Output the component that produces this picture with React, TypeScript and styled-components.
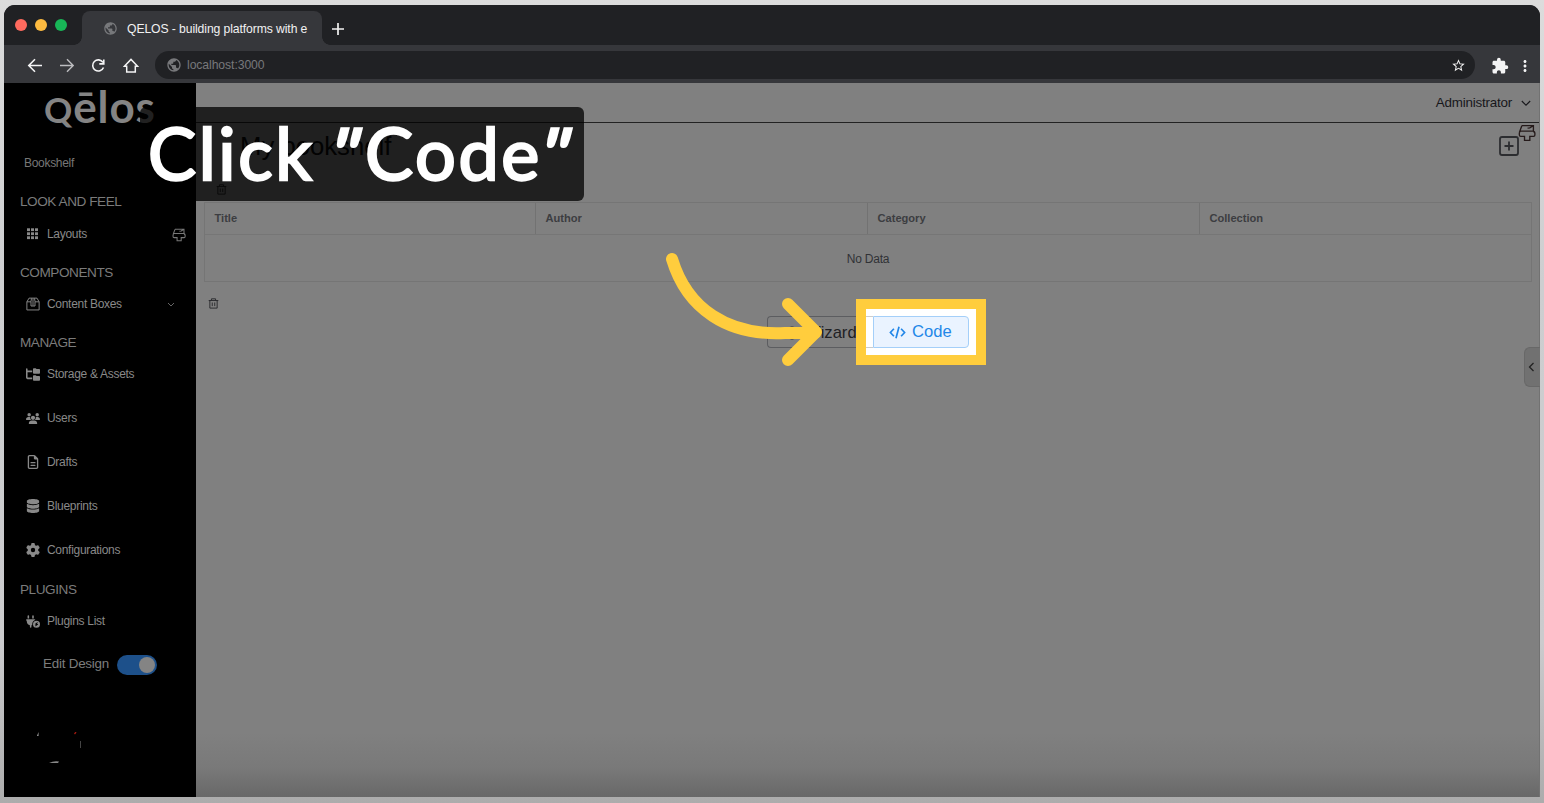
import React from 'react';
import styled, { createGlobalStyle } from 'styled-components';
import { FaDatabase } from 'react-icons/fa';
import { FaFolderTree, FaUsers, FaRegFileLines, FaGear, FaPlugCircleBolt } from 'react-icons/fa6';
import { MdPublic, MdStarBorder, MdExtension, MdMoreVert } from 'react-icons/md';

const GlobalStyle = createGlobalStyle`
  * { box-sizing: border-box; }
  body {
    margin: 0;
    font-family: 'Liberation Sans', Arial, sans-serif;
    overflow: hidden;
  }
`;

const Desktop = styled.div`
  position: relative;
  width: 1544px;
  height: 803px;
  padding: 5px 4px 6px;
  background: linear-gradient(180deg, #dcdcdc 0%, #cdced0 35%, #cbcbcd 80%, #acacac 100%);
`;

const Window = styled.div`
  display: flex;
  flex-direction: column;
  height: 792px;
  border-radius: 11px 11px 0 0;
  overflow: hidden;
  background: #202124;
`;

const TabBar = styled.div`
  display: flex;
  height: 40px;
  background: #202124;
`;

const Lights = styled.div`
  display: flex;
  gap: 8px;
  width: 78px;
  padding: 14px 0 0 11px;
`;

const Light = styled.i<{ $color: string }>`
  width: 12px;
  height: 12px;
  border-radius: 50%;
  background: ${(p) => p.$color};
`;

const Tab = styled.div`
  position: relative;
  display: flex;
  align-items: center;
  gap: 9px;
  width: 240px;
  height: 34px;
  margin-top: 6px;
  padding: 1px 0 0 21px;
  border-radius: 8px 8px 0 0;
  background: #36373b;
  color: #f1f1f2;
  font-size: 12.2px;
  letter-spacing: -0.1px;
  white-space: nowrap;
  svg { color: #77787b; }
  &::before, &::after {
    content: '';
    position: absolute;
    bottom: 0;
    width: 8px;
    height: 8px;
  }
  &::before { left: -8px; background: radial-gradient(circle at 0 0, transparent 7.5px, #36373b 8px); }
  &::after { right: -8px; background: radial-gradient(circle at 100% 0, transparent 7.5px, #36373b 8px); }
`;

const NewTab = styled.div`
  padding: 18px 0 0 10px;
  line-height: 0;
`;

const Toolbar = styled.div`
  display: flex;
  align-items: center;
  height: 38px;
  background: #36373b;
  color: #f4f4f5;
  padding: 2px 0 0 23px;
`;

const NavButtons = styled.div`
  display: flex;
  gap: 16px;
  width: 128px;
`;

const Address = styled.div`
  display: flex;
  align-items: center;
  width: 1320px;
  height: 28px;
  padding: 0 9px 0 11px;
  border-radius: 14px;
  background: #202124;
  color: #77787b;
  font-size: 12.2px;
  letter-spacing: -0.08px;
`;

const Url = styled.span`
  flex: 1;
  margin-left: 5px;
`;

const ToolbarEnd = styled.div`
  display: flex;
  align-items: center;
  gap: 7px;
  margin: 1px 0 0 16px;
`;

const AppBody = styled.div`
  display: flex;
  height: 714px;
`;

const Sidebar = styled.aside`
  width: 192px;
  background: #000;
  color: #898989;
`;

const Logo = styled.div`
  height: 66px;
  padding: 0 0 0 40px;
  font-family: Lato, sans-serif;
  font-size: 44px;
  line-height: 46px;
  font-weight: 700;
  letter-spacing: 0.9px;
  white-space: nowrap;
  color: #848484;
`;

const LogoInitial = styled.span`
  font-size: 35px;
`;

const HomeLink = styled.div`
  height: 38px;
  padding: 0 20px;
  font-size: 12px;
  line-height: 29px;
  letter-spacing: -0.3px;
  color: #777;
`;

const Group = styled.h2<{ $h: number }>`
  margin: 0;
  height: ${(p) => p.$h}px;
  padding-left: 16px;
  font-size: 13.6px;
  font-weight: 400;
  line-height: 30px;
  letter-spacing: -0.45px;
  color: #7b7b7b;
`;

const Item = styled.div<{ $h: number }>`
  display: flex;
  align-items: flex-start;
  height: ${(p) => p.$h}px;
  padding: 0 10px 0 22px;
  font-size: 12px;
  line-height: 29px;
  letter-spacing: -0.3px;
`;

const ItemIcon = styled.span`
  display: flex;
  align-items: center;
  justify-content: center;
  width: 14px;
  height: 28px;
  margin-right: 7px;
`;

const ItemLabel = styled.span`
  flex: 1;
`;

const ItemAction = styled.span<{ $pad?: number }>`
  display: flex;
  align-items: center;
  height: 30px;
  padding-right: ${(p) => p.$pad ?? 0}px;
`;

const SwitchRow = styled.div`
  display: flex;
  align-items: center;
  gap: 8px;
  height: 38px;
  margin-top: 10px;
  padding: 0 0 1px 39px;
  font-size: 13.4px;
  letter-spacing: -0.22px;
  color: #7d7d7d;
`;

const Switch = styled.span`
  display: flex;
  justify-content: flex-end;
  width: 40px;
  height: 20px;
  margin-top: 2px;
  padding: 2px;
  border-radius: 10px;
  background: #1d508a;
`;

const Knob = styled.i`
  width: 16px;
  height: 16px;
  border-radius: 50%;
  background: #848484;
`;

const Spinner = styled.div`
  padding: 49px 0 0 32px;
  line-height: 0;
`;

const Main = styled.main`
  position: relative;
  flex: 1;
  background: linear-gradient(180deg, #808080 0, #808080 650px, #797979 685px, #686868 714px);
  border-right: 1px solid #727272;
`;

const Header = styled.header`
  display: flex;
  align-items: center;
  justify-content: flex-end;
  gap: 9px;
  height: 40px;
  padding-right: 8px;
  border-bottom: 1px solid #222;
  font-size: 13.4px;
  letter-spacing: -0.2px;
  color: #17171b;
`;

const TitleRow = styled.div`
  display: flex;
  justify-content: space-between;
  height: 57px;
  padding: 9px 3px 0 44px;
`;

const Title = styled.h1`
  margin: 0;
  font-size: 25.7px;
  font-weight: 400;
  line-height: 28px;
  color: #080808;
`;

const TitleActions = styled.div`
  display: flex;
  align-items: flex-start;
  line-height: 0;
`;

const AddButton = styled.span`
  padding-top: 4px;
`;

const BrushButton = styled.span`
  margin: -8px 0 0 -1px;
`;

const DeleteSlot = styled.div<{ $x: number; $y: number; $h: number }>`
  height: ${(p) => p.$h}px;
  padding: ${(p) => p.$y}px 0 0 ${(p) => p.$x}px;
  line-height: 0;
`;

const Table = styled.div`
  margin: 0 7px 0 8px;
  height: 80px;
  border: 1px solid #757575;
`;

const HeadRow = styled.div`
  display: grid;
  grid-template-columns: 331px 332px 332px 1fr;
  height: 32px;
  border-bottom: 1px solid #767676;
`;

const HeadCell = styled.div`
  padding-left: 9.5px;
  border-right: 1px solid #727272;
  font-size: 11.1px;
  font-weight: 700;
  line-height: 30px;
  color: #3c3d41;
  &:last-child { border-right: 0; }
`;

const Empty = styled.div`
  text-align: center;
  font-size: 12px;
  line-height: 48px;
  letter-spacing: -0.2px;
  color: #303236;
`;

const Choices = styled.div`
  display: flex;
  margin-left: 571px;
  height: 32px;
  font-size: 16.6px;
`;

const Wizard = styled.div`
  display: flex;
  align-items: center;
  gap: 6px;
  width: 106px;
  padding: 1px 0 0 17px;
  border: 1px solid #5c5d60;
  border-right: 0;
  border-radius: 4px 0 0 4px;
  color: #202124;
`;

const CodeButton = styled.div`
  display: flex;
  align-items: center;
  gap: 6px;
  width: 96px;
  height: 32px;
  padding: 0 0 0 15px;
  border: 1px solid #a4cff9;
  border-radius: 0 4px 4px 0;
  background: #eaf3ff;
  color: #2387e8;
  font-size: 16.6px;
`;

const DrawerHandle = styled.div`
  position: absolute;
  top: 264px;
  right: -1px;
  display: flex;
  align-items: center;
  width: 16px;
  height: 40px;
  padding-left: 1px;
  border-radius: 6px 0 0 6px;
  background: #717171;
  border: 1px solid #686868;
  border-right: 0;
`;

const Caption = styled.div`
  position: absolute;
  left: 140px;
  top: 107px;
  display: flex;
  width: 444px;
  height: 94px;
  padding-left: 8px;
  border-radius: 6px;
  background: rgba(0, 0, 0, 0.75);
  color: #fff;
  font-family: Lato, sans-serif;
  font-size: 72px;
  font-weight: 400;
  -webkit-text-stroke: 2.4px #fff;
  line-height: 91px;
  white-space: nowrap;
`;

const CaptionWord = styled.span<{ $w: number }>`
  width: ${(p) => p.$w}px;
  letter-spacing: 2.6px;
`;

const CaptionQuote = styled.span`
  width: 31px;
  font-style: italic;
  transform: scaleX(1.2) skewX(-5deg);
  transform-origin: 50% 35%;
`;

const Highlight = styled.div`
  position: absolute;
  left: 856px;
  top: 299px;
  width: 130px;
  height: 66px;
  padding: 7px 6px;
  border: 10px solid #ffcd3d;
  background: #fff;
`;

const HighlightEdge = styled.div`
  margin-left: -6px;
  padding-left: 7px;
  background: linear-gradient(#ccc, #ccc) 0 0 / 7px 1px no-repeat, linear-gradient(#ccc, #ccc) 0 100% / 7px 1px no-repeat;
`;

const Arrow = styled.svg`
  position: absolute;
  left: 660px;
  top: 245px;
`;

const Stroke = ({ size = 16, box = 16, w = 1.4, color = 'currentColor', d }: { size?: number; box?: number; w?: number; color?: string; d: string }) => (
  <svg width={size} height={size} viewBox={`0 0 ${box} ${box}`} fill="none" stroke={color} strokeWidth={w}>
    <path d={d} />
  </svg>
);

const Brush = ({ size, color }: { size: number; color: string }) => (
  <Stroke size={size} w={1.2} color={color} d="M3.4 1.5H13.7V6.3L14.8 7.8M3.4 1.5L1.3 7.3M2.3 6.3H13.7Q15 6.8 15 8V9.8Q15 11 13.8 11H10.5V14.5H5.8V11H2.5Q1.2 11 1.2 9.8V8Q1.2 6.8 2.3 6.3ZM8.5 3.6L10.5 3.4L13.2 1.8" />
);

const Trash = ({ color }: { color: string }) => (
  <Stroke size={11} w={1.4} color={color} d="M1 3.7H15M5 3.5V1.2H11V3.5M2.7 3.7V14.7H13.3V3.7M6.2 6.5V11.8M9.8 6.5V11.8" />
);

const Grid9 = () => (
  <svg width="12" height="12" viewBox="0 0 12 12" fill="currentColor">
    {[0.3, 4.3, 8.3].map((y) => [0, 4, 8].map((x) => <rect key={`${x}-${y}`} x={x} y={y} width="3" height="2.8" />))}
  </svg>
);

const items = [
  { label: 'Storage & Assets', icon: <FaFolderTree size={15} />, h: 44 },
  { label: 'Users', icon: <FaUsers size={15} />, h: 44 },
  { label: 'Drafts', icon: <FaRegFileLines size={14} />, h: 44 },
  { label: 'Blueprints', icon: <FaDatabase size={14} />, h: 44 },
  { label: 'Configurations', icon: <FaGear size={14} />, h: 39 },
];

export default function App() {
  return (
    <>
      <GlobalStyle />
      <Desktop>
        <Window>
          <TabBar>
            <Lights>
              <Light $color="#ff6a5e" />
              <Light $color="#febb40" />
              <Light $color="#18b657" />
            </Lights>
            <Tab>
              <MdPublic size={15} />
              <span>QELOS - building platforms with e</span>
            </Tab>
            <NewTab>
              <Stroke size={12} box={12} w={1.7} color="#f2f2f2" d="M6 0V12M0 6H12" />
            </NewTab>
          </TabBar>
          <Toolbar>
            <NavButtons>
              <Stroke w={1.6} d="M15 8.5H2M8 2.3L1.8 8.5L8 14.7" />
              <Stroke w={1.4} color="#bdbdc0" d="M1 8.5H14M8 2.3L14.2 8.5L8 14.7" />
              <Stroke w={1.6} d="M12 5.4A5.6 5.6 0 1 0 12.5 10.5M12.8 2.5V6.9H8.3" />
              <Stroke w={1.5} d="M1.4 9.3L8 2.4L14.6 9.3H12.3V15H3.7V9.3Z" />
            </NavButtons>
            <Address>
              <MdPublic size={16} />
              <Url>localhost:3000</Url>
              <MdStarBorder size={15} color="#f2f2f2" />
            </Address>
            <ToolbarEnd>
              <MdExtension size={18} />
              <MdMoreVert size={18} />
            </ToolbarEnd>
          </Toolbar>
          <AppBody>
            <Sidebar>
              <Logo><LogoInitial>Q</LogoInitial>ēlos</Logo>
              <HomeLink>Bookshelf</HomeLink>
              <Group $h={33}>LOOK AND FEEL</Group>
              <Item $h={38}>
                <ItemIcon><Grid9 /></ItemIcon>
                <ItemLabel>Layouts</ItemLabel>
                <ItemAction><Brush size={14} color="#777" /></ItemAction>
              </Item>
              <Group $h={32}>COMPONENTS</Group>
              <Item $h={38}>
                <ItemIcon>
                  <Stroke size={14} w={1.1} d="M1 5.5L3.5 1.3H12.5L15 5.5V14.8H1ZM1 5.5H5.7M10.3 5.5H15M6.3 1.5L5.7 5V10.3H10.3V5L9.7 1.5M8 1.5V10" />
                </ItemIcon>
                <ItemLabel>Content Boxes</ItemLabel>
                <ItemAction $pad={11}><Stroke size={8} box={8} w={1} color="#666" d="M1 2L4 5L7 2" /></ItemAction>
              </Item>
              <Group $h={32}>MANAGE</Group>
              {items.map((it) => (
                <Item key={it.label} $h={it.h}>
                  <ItemIcon>{it.icon}</ItemIcon>
                  <ItemLabel>{it.label}</ItemLabel>
                </Item>
              ))}
              <Group $h={32}>PLUGINS</Group>
              <Item $h={28}>
                <ItemIcon><FaPlugCircleBolt size={15} /></ItemIcon>
                <ItemLabel>Plugins List</ItemLabel>
              </Item>
              <SwitchRow>
                Edit Design
                <Switch><Knob /></Switch>
              </SwitchRow>
              <Spinner>
                <svg width="50" height="34" viewBox="0 0 50 34" fill="none">
                  <path d="M1 4L2.5 0V4Z" fill="#aaa" />
                  <path d="M38.5 2L40 0" stroke="#a51a10" strokeWidth="1.3" />
                  <path d="M44.5 9V16" stroke="#444" />
                  <path d="M13 31Q18 28.5 23 29.5L22 31Z" fill="#888" />
                </svg>
              </Spinner>
            </Sidebar>
            <Main>
              <Header>
                Administrator
                <Stroke size={10} box={10} w={1.1} d="M0.8 3L5 7.2L9.2 3" />
              </Header>
              <TitleRow>
                <Title>My bookshelf</Title>
                <TitleActions>
                  <AddButton>
                    <Stroke size={20} box={20} w={1.8} color="#2c2d30" d="M3 1H17Q19 1 19 3V17Q19 19 17 19H3Q1 19 1 17V3Q1 1 3 1ZM10 5.5V14.5M5.5 10H14.5" />
                  </AddButton>
                  <BrushButton><Brush size={18} color="#251a1a" /></BrushButton>
                </TitleActions>
              </TitleRow>
              <DeleteSlot $x={20} $y={4} $h={22}><Trash color="#222" /></DeleteSlot>
              <Table>
                <HeadRow>
                  <HeadCell>Title</HeadCell>
                  <HeadCell>Author</HeadCell>
                  <HeadCell>Category</HeadCell>
                  <HeadCell>Collection</HeadCell>
                </HeadRow>
                <Empty>No Data</Empty>
              </Table>
              <DeleteSlot $x={12} $y={16} $h={34}><Trash color="#2a2b2e" /></DeleteSlot>
              <Choices>
                <Wizard>
                  <svg width="14" height="14" viewBox="0 0 14 14"><circle cx="7" cy="7" r="6.5" fill="#26272a" /></svg>
                  Wizard
                </Wizard>
              </Choices>
              <DrawerHandle><Stroke size={10} box={10} w={1.3} color="#222" d="M7.5 1L3.5 5L7.5 9" /></DrawerHandle>
            </Main>
          </AppBody>
        </Window>
        <Caption>
          <CaptionWord $w={186}>Click</CaptionWord>
          <CaptionQuote>"</CaptionQuote>
          <CaptionWord $w={179}>Code</CaptionWord>
          <CaptionQuote>"</CaptionQuote>
        </Caption>
        <Highlight>
          <HighlightEdge>
            <CodeButton>
              <Stroke size={17} box={18} w={1.8} d="M5.2 5L1.5 9L5.2 13M12.8 5L16.5 9L12.8 13M10.6 3L7.4 15" />
              Code
            </CodeButton>
          </HighlightEdge>
        </Highlight>
        <Arrow width="170" height="125" viewBox="0 0 170 125" fill="none" stroke="#ffcd3d" strokeWidth="12" strokeLinecap="round" strokeLinejoin="round">
          <path d="M12 14C27 64 68 91 125 88H155" />
          <path d="M128 59L156 87L128 115" />
        </Arrow>
      </Desktop>
    </>
  );
}
